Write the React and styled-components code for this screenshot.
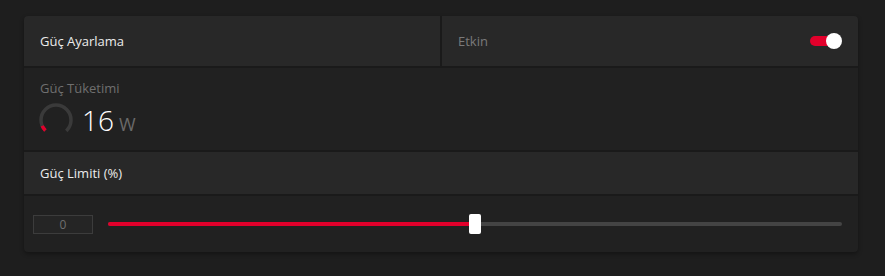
import React from 'react';
import styled, { createGlobalStyle } from 'styled-components';

const GlobalStyle = createGlobalStyle`
  html, body {
    margin: 0;
    padding: 0;
    background: #1e1e1e;
    font-family: 'Open Sans', 'Noto Sans', sans-serif;
  }
`;

const Page = styled.div`
  padding: 16px 27px 25px 24px;
`;

const Card = styled.div`
  background: #1a1a1a;
  border-radius: 4px;
  overflow: hidden;
  box-shadow: 0 2px 4px rgba(0, 0, 0, 0.35);
  display: flex;
  flex-direction: column;
  gap: 2px;
`;

const HeaderRow = styled.div`
  display: flex;
  gap: 2px;
  height: ${(p) => p.$h}px;
`;

const HeaderCell = styled.div`
  flex: ${(p) => (p.$grow ? 1 : 'none')};
  width: ${(p) => (p.$w ? `${p.$w}px` : 'auto')};
  background: #282828;
  display: flex;
  align-items: center;
  justify-content: space-between;
  padding: 0 16px;
  box-sizing: border-box;
`;

const Title = styled.span`
  font-size: 13px;
  color: ${(p) => (p.$muted ? '#7a7a7a' : '#ececec')};
`;

const Toggle = styled.div`
  position: relative;
  width: 32px;
  height: 16px;
  display: flex;
  align-items: center;
`;

const Track = styled.div`
  width: 28px;
  height: 10px;
  border-radius: 5px;
  background: #e2002b;
`;

const Knob = styled.div`
  position: absolute;
  right: 0;
  top: 0;
  width: 16px;
  height: 16px;
  border-radius: 50%;
  background: #ffffff;
`;

const Body = styled.div`
  background: #212121;
  height: ${(p) => p.$h}px;
  box-sizing: border-box;
  padding: ${(p) => p.$pad};
`;

const Label = styled.div`
  font-size: 13px;
  color: #6f6f6f;
  line-height: 18px;
`;

const Reading = styled.div`
  display: flex;
  align-items: center;
  gap: 8px;
  margin-top: 5px;
  margin-left: -2px;
`;

const Value = styled.span`
  font-size: 28px;
  font-weight: 300;
  color: #ffffff;
  line-height: 36px;
`;

const Unit = styled.span`
  font-size: 18px;
  color: #6a6a6a;
  margin-left: 5px;
  position: relative;
  top: 0px;
`;

const SliderRow = styled.div`
  display: flex;
  align-items: center;
  gap: 15px;
  height: 100%;
`;

const NumberBox = styled.div`
  width: 60px;
  height: 19px;
  box-sizing: border-box;
  border: 1px solid #3c3c3c;
  background: #252525;
  color: #6f6f6f;
  font-size: 12px;
  display: flex;
  align-items: center;
  justify-content: center;
`;

const SliderTrack = styled.div`
  position: relative;
  flex: 1;
  height: 4px;
  border-radius: 2px;
  background: #444444;
`;

const SliderFill = styled.div`
  height: 100%;
  border-radius: 2px;
  background: #e2002b;
`;

const Thumb = styled.div`
  position: absolute;
  top: -8px;
  width: 12px;
  height: 20px;
  margin-left: -6px;
  border-radius: 2px;
  background: #ffffff;
`;

const Gauge = () => {
  const r = 15;
  const c = 2 * Math.PI * r;
  const arc = c * 0.75;
  return (
    <svg width="36" height="36" viewBox="0 0 36 36">
      <circle
        cx="18"
        cy="18"
        r={r}
        fill="none"
        stroke="#3a3a3a"
        strokeWidth="3.5"
        strokeDasharray={`${arc} ${c}`}
        transform="rotate(135 18 18)"
      />
      <circle
        cx="18"
        cy="18"
        r={r}
        fill="none"
        stroke="#e2002b"
        strokeWidth="3.5"
        strokeDasharray={`${c * 0.06} ${c}`}
        transform="rotate(135 18 18)"
      />
    </svg>
  );
};

export default function App() {
  const pct = 50;
  return (
    <>
      <GlobalStyle />
      <Page>
        <Card>
          <HeaderRow $h={50}>
            <HeaderCell $w={416}>
              <Title>Güç Ayarlama</Title>
            </HeaderCell>
            <HeaderCell $grow>
              <Title $muted>Etkin</Title>
              <Toggle>
                <Track />
                <Knob />
              </Toggle>
            </HeaderCell>
          </HeaderRow>
          <Body $h={82} $pad="11px 16px 0 16px">
            <Label>Güç Tüketimi</Label>
            <Reading>
              <Gauge />
              <div>
                <Value>16</Value>
                <Unit>W</Unit>
              </div>
            </Reading>
          </Body>
          <HeaderRow $h={42}>
            <HeaderCell $grow>
              <Title>Güç Limiti (%)</Title>
            </HeaderCell>
          </HeaderRow>
          <Body $h={56} $pad="0 16px 0 9px">
            <SliderRow>
              <NumberBox>0</NumberBox>
              <SliderTrack>
                <SliderFill style={{ width: `${pct}%` }} />
                <Thumb style={{ left: `${pct}%` }} />
              </SliderTrack>
            </SliderRow>
          </Body>
        </Card>
      </Page>
    </>
  );
}
